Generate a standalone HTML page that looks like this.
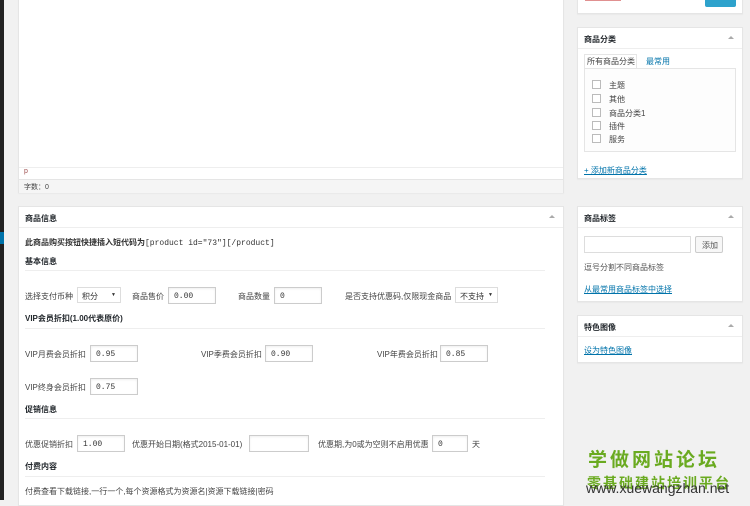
<!DOCTYPE html>
<html><head><meta charset="utf-8"><style>
*{box-sizing:border-box;margin:0;padding:0}
body{width:750px;height:500px;overflow:hidden;background:#f1f1f1;font-family:"Liberation Sans","Noto Sans CJK SC",sans-serif;font-size:8px;color:#444;position:relative}
.abs{position:absolute}
.box{position:absolute;background:#fff;border:1px solid #e5e5e5;box-shadow:0 1px 1px rgba(0,0,0,.04)}
.h{font-weight:bold;color:#23282d;font-size:8px}
.arr{position:absolute;right:8px;top:8px;width:0;height:0;border-left:3px solid transparent;border-right:3px solid transparent;border-bottom:3px solid #aaa}
.inp{position:absolute;border:1px solid #ccc;background:#fff;height:17px;font-family:"Liberation Mono",monospace;font-size:8px;padding:4px 5px;color:#333;box-shadow:inset 0 1px 2px rgba(0,0,0,.07)}
.sel{position:absolute;border:1px solid #ddd;background:#fff;height:16px;font-size:8px;padding:3px 4px;color:#333}
.sel:after{content:"▼";position:absolute;right:4px;top:4px;font-size:5px}
.t{position:absolute;white-space:nowrap}
.hr{position:absolute;left:6px;right:18px;height:1px;background:#eee}
.lnk{color:#0073aa;text-decoration:underline}
.cb{position:absolute;left:7px;width:9px;height:9px;border:1px solid #bbb;background:#fff}
</style></head><body>
<div class="abs" style="left:0;top:0;width:4px;height:500px;background:#222"></div>
<div class="abs" style="left:0;top:232px;width:4px;height:12px;background:#0073aa"></div>

<!-- editor -->
<div class="box" style="left:18px;top:-2px;width:546px;height:195px">
  <div class="abs" style="left:0;right:0;top:168px;height:1px;background:#eee"></div>
  <div class="t" style="left:5px;top:169px;color:#a05050;font-size:7px">p</div>
  <div class="abs" style="left:0;right:0;top:180px;height:14px;background:#f5f5f5;border-top:1px solid #e5e5e5"></div>
  <div class="t" style="left:5px;top:183px;font-size:7px">字数：0</div>
</div>

<!-- product info -->
<div class="box" style="left:18px;top:206px;width:546px;height:300px">
  <div class="t h" style="left:6px;top:6px">商品信息</div><div class="arr"></div>
  <div class="abs" style="left:0;right:0;top:20px;height:1px;background:#eee"></div>
  <div class="t" style="left:6px;top:30px;font-weight:bold;color:#333">此商品购买按钮快捷插入短代码为<span style="font-family:'Liberation Mono',monospace;font-weight:normal">[product id="73"][/product]</span></div>
  <div class="t h" style="left:6px;top:49px">基本信息</div>
  <div class="hr" style="top:63px"></div>
  <div class="t" style="left:6px;top:84px">选择支付币种</div>
  <div class="sel" style="left:58px;top:80px;width:44px">积分</div>
  <div class="t" style="left:113px;top:84px">商品售价</div>
  <div class="inp" style="left:149px;top:80px;width:48px">0.00</div>
  <div class="t" style="left:219px;top:84px">商品数量</div>
  <div class="inp" style="left:255px;top:80px;width:48px">0</div>
  <div class="t" style="left:326px;top:84px">是否支持优惠码,仅限现金商品</div>
  <div class="sel" style="left:436px;top:80px;width:43px">不支持</div>
  <div class="t h" style="left:6px;top:106px">VIP会员折扣(1.00代表原价)</div>
  <div class="hr" style="top:121px"></div>
  <div class="t" style="left:6px;top:142px">VIP月费会员折扣</div>
  <div class="inp" style="left:71px;top:138px;width:48px">0.95</div>
  <div class="t" style="left:182px;top:142px">VIP季费会员折扣</div>
  <div class="inp" style="left:246px;top:138px;width:48px">0.90</div>
  <div class="t" style="left:358px;top:142px">VIP年费会员折扣</div>
  <div class="inp" style="left:421px;top:138px;width:48px">0.85</div>
  <div class="t" style="left:6px;top:175px">VIP终身会员折扣</div>
  <div class="inp" style="left:71px;top:171px;width:48px">0.75</div>
  <div class="t h" style="left:6px;top:197px">促销信息</div>
  <div class="hr" style="top:211px"></div>
  <div class="t" style="left:6px;top:232px">优惠促销折扣</div>
  <div class="inp" style="left:58px;top:228px;width:48px">1.00</div>
  <div class="t" style="left:113px;top:232px">优惠开始日期(格式2015-01-01)</div>
  <div class="inp" style="left:230px;top:228px;width:60px"></div>
  <div class="t" style="left:299px;top:232px">优惠期,为0或为空则不启用优惠</div>
  <div class="inp" style="left:413px;top:228px;width:36px">0</div>
  <div class="t" style="left:453px;top:232px">天</div>
  <div class="t h" style="left:6px;top:254px">付费内容</div>
  <div class="hr" style="top:269px"></div>
  <div class="t" style="left:6px;top:279px">付费查看下载链接,一行一个,每个资源格式为资源名|资源下载链接|密码</div>
</div>

<!-- publish -->
<div class="box" style="left:577px;top:-2px;width:166px;height:16px"></div>
<div class="abs" style="left:585px;top:-3px;width:36px;height:4px;background:#e09090"></div>
<div class="abs" style="left:705px;top:-3px;width:31px;height:10px;background:#2ea2cc;border-radius:2px"></div>

<!-- categories -->
<div class="box" style="left:577px;top:27px;width:166px;height:152px">
  <div class="t h" style="left:6px;top:6px">商品分类</div><div class="arr"></div>
  <div class="abs" style="left:0;right:0;top:20px;height:1px;background:#eee"></div>
  <div class="abs" style="left:6px;top:26px;width:53px;height:14px;border:1px solid #e5e5e5;border-bottom:none;background:#fff"></div>
  <div class="t" style="left:9px;top:28px">所有商品分类</div>
  <div class="t" style="left:68px;top:28px;color:#0073aa">最常用</div>
  <div class="abs" style="left:6px;top:40px;width:152px;height:84px;border:1px solid #e5e5e5;background:#fdfdfd">
    <div class="cb" style="top:11px"></div><div class="t" style="left:24px;top:11px">主题</div>
    <div class="cb" style="top:25px"></div><div class="t" style="left:24px;top:25px">其他</div>
    <div class="cb" style="top:39px"></div><div class="t" style="left:24px;top:39px">商品分类1</div>
    <div class="cb" style="top:52px"></div><div class="t" style="left:24px;top:52px">插件</div>
    <div class="cb" style="top:65px"></div><div class="t" style="left:24px;top:65px">服务</div>
  </div>
  <div class="t lnk" style="left:6px;top:137px">+ 添加新商品分类</div>
</div>

<!-- tags -->
<div class="box" style="left:577px;top:206px;width:166px;height:96px">
  <div class="t h" style="left:6px;top:6px">商品标签</div><div class="arr"></div>
  <div class="abs" style="left:0;right:0;top:20px;height:1px;background:#eee"></div>
  <div class="abs" style="left:6px;top:29px;width:107px;height:17px;border:1px solid #ddd"></div>
  <div class="abs" style="left:117px;top:29px;width:28px;height:17px;border:1px solid #ccc;background:#f7f7f7;border-radius:2px"></div>
  <div class="t" style="left:124px;top:33px;color:#555">添加</div>
  <div class="t" style="left:6px;top:55px;color:#555">逗号分割不同商品标签</div>
  <div class="t lnk" style="left:6px;top:77px">从最常用商品标签中选择</div>
</div>

<!-- featured -->
<div class="box" style="left:577px;top:315px;width:166px;height:48px">
  <div class="t h" style="left:6px;top:6px">特色图像</div><div class="arr"></div>
  <div class="abs" style="left:0;right:0;top:20px;height:1px;background:#eee"></div>
  <div class="t lnk" style="left:6px;top:29px">设为特色图像</div>
</div>

<!-- watermark -->
<div class="t" style="left:588px;top:445px;font-size:19px;font-weight:bold;color:#6aaa20;letter-spacing:3px;font-family:'Noto Sans CJK SC',sans-serif">学做网站论坛</div>
<div class="t" style="left:587px;top:473px;font-size:14px;font-weight:bold;color:#6aaa20;letter-spacing:2px;font-family:'Noto Sans CJK SC',sans-serif">零基础建站培训平台</div>
<div class="t" style="left:586px;top:480px;font-size:14px;color:#333">www.xuewangzhan.net</div>
</body></html>
